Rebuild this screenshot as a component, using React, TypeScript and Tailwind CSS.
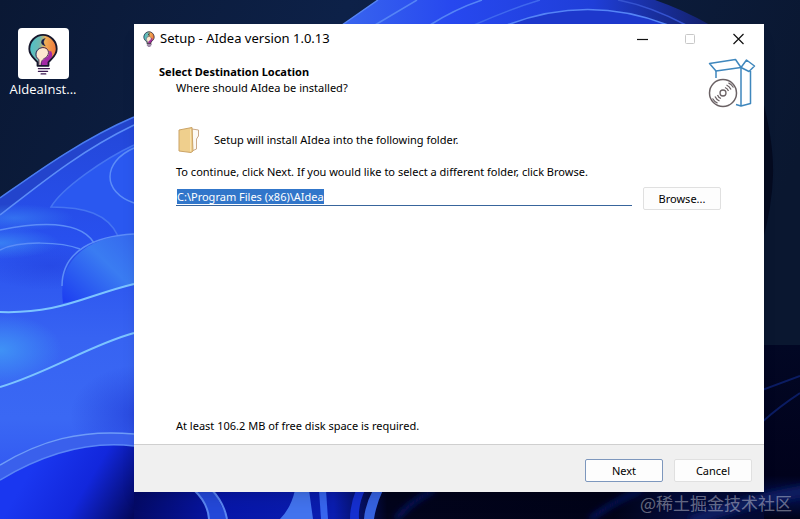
import { useEffect, useRef } from "react";

function Wallpaper() {
    return (
        <svg
            className="absolute inset-0 h-full w-full"
            viewBox="0 0 800 519"
            preserveAspectRatio="xMidYMid slice"
            aria-hidden="true"
        >
            <defs>
                <linearGradient id="sky" x1="0" y1="0" x2="1" y2="0.3">
                    <stop offset="0" stopColor="#0a1834" />
                    <stop offset="0.4" stopColor="#0d2148" />
                    <stop offset="1" stopColor="#0a1730" />
                </linearGradient>
                <linearGradient id="petal" gradientUnits="userSpaceOnUse" x1="0" y1="117" x2="0" y2="519">
                    <stop offset="0" stopColor="#2347d8" />
                    <stop offset="0.3" stopColor="#2850ee" />
                    <stop offset="0.55" stopColor="#3763f2" />
                    <stop offset="0.75" stopColor="#3a68f4" />
                    <stop offset="1" stopColor="#2b4cf0" />
                </linearGradient>
                <radialGradient id="glow">
                    <stop offset="0" stopColor="#3f92f6" />
                    <stop offset="1" stopColor="#3f92f6" stopOpacity="0" />
                </radialGradient>
                <radialGradient id="shade">
                    <stop offset="0" stopColor="#1526c8" stopOpacity="0.8" />
                    <stop offset="1" stopColor="#1526c8" stopOpacity="0" />
                </radialGradient>
                <linearGradient id="inner" x1="0" y1="1" x2="1" y2="0">
                    <stop offset="0" stopColor="#1c3cf0" />
                    <stop offset="0.6" stopColor="#3a7cf2" />
                    <stop offset="1" stopColor="#3467ee" />
                </linearGradient>
                <linearGradient id="deep" gradientUnits="userSpaceOnUse" x1="40" y1="455" x2="135" y2="512">
                    <stop offset="0" stopColor="#1a37f0" />
                    <stop offset="0.5" stopColor="#1227dc" />
                    <stop offset="1" stopColor="#03085e" />
                </linearGradient>
                <linearGradient id="crown" gradientUnits="userSpaceOnUse" x1="345" y1="0" x2="700" y2="0">
                    <stop offset="0" stopColor="#3864ee" />
                    <stop offset="0.3" stopColor="#2748ef" />
                    <stop offset="0.7" stopColor="#1f3ed8" />
                    <stop offset="1" stopColor="#142373" />
                </linearGradient>
                <linearGradient id="night" gradientUnits="userSpaceOnUse" x1="0" y1="345" x2="0" y2="519">
                    <stop offset="0" stopColor="#020724" />
                    <stop offset="0.75" stopColor="#01021c" />
                    <stop offset="0.88" stopColor="#030f4a" />
                    <stop offset="1" stopColor="#010318" />
                </linearGradient>
                <linearGradient id="base" gradientUnits="userSpaceOnUse" x1="134" y1="0" x2="800" y2="0">
                    <stop offset="0" stopColor="#040a66" />
                    <stop offset="0.13" stopColor="#0716a8" />
                    <stop offset="0.3" stopColor="#0a1db0" />
                    <stop offset="0.38" stopColor="#02041c" />
                    <stop offset="0.72" stopColor="#010318" />
                    <stop offset="0.82" stopColor="#040c3c" />
                    <stop offset="1" stopColor="#02072e" />
                </linearGradient>
                <filter id="soft" x="-20%" y="-50%" width="140%" height="200%">
                    <feGaussianBlur stdDeviation="3" />
                </filter>
            </defs>

            <rect width="800" height="519" fill="url(#sky)" />

            {/* petals on the left */}
            <path d="M0 198C30 177 80 140 134 117L300 60V519H0Z" fill="url(#petal)" />
            <path d="M0 198C30 177 80 140 134 117V125C80 151 40 184 0 215Z" fill="#2344cc" />
            <path d="M134 145C104 159 62 188 51 207C85 207 108 214 118 236L134 234Z" fill="#2a58f0" />
            <ellipse cx="14" cy="218" rx="60" ry="14" fill="url(#glow)" opacity="0.5" />
            <ellipse cx="0" cy="243" rx="60" ry="16" fill="url(#glow)" opacity="0.7" />
            <ellipse cx="50" cy="266" rx="70" ry="24" fill="url(#shade)" opacity="0.3" />
            <path d="M134 234C96 236 56 254 63 303C88 300 112 290 134 284Z" fill="url(#inner)" />
            <ellipse cx="0" cy="350" rx="62" ry="36" fill="url(#glow)" />
            <ellipse cx="140" cy="415" rx="70" ry="50" fill="url(#shade)" opacity="0.6" />
            <path d="M0 480C40 456 84 440 134 446V519H0Z" fill="url(#deep)" />
            <path d="M0 465C40 441 80 429 134 434V446C84 440 40 456 0 480Z" fill="#3a60ec" />
            <g fill="none" stroke="#5c8df8" strokeWidth="1.5">
                <path d="M0 198C30 177 80 140 134 117" stroke="#4a7cf0" />
                <path d="M0 215C40 184 80 151 134 125" />
                <path d="M118 236C108 214 85 207 51 207C62 188 104 159 134 145" stroke="#4574f2" />
                <path d="M134 148C102 162 102 192 134 203" />
                <path d="M0 230C40 222 80 220 94 243" />
                <path d="M0 250C20 240 62 242 80 249" />
                <path d="M134 234C96 236 62 250 62 286" />
                <path d="M0 465C40 441 80 429 134 434" stroke="#6f9cf8" />
                <path d="M0 480C40 456 84 440 134 446" stroke="#5a86f6" />
            </g>
            <g fill="none" stroke="#7cc4ff" strokeWidth="2">
                <path d="M0 312C60 314 84 296 134 284" />
                <path d="M0 387C50 372 90 345 134 333" />
            </g>

            {/* crest along the top edge */}
            <path d="M342 25L378 0H655Q684 10 710 25Z" fill="url(#crown)" />
            <path d="M507 25Q588 -6 668 25Z" fill="#1d38cc" />
            <g fill="none" stroke="#5584f6" strokeWidth="1.5">
                <path d="M342 25L378 0M375 25L417 0M430 25Q455 9 482 0" />
                <path d="M474 25Q510 9 540 0" stroke="#3f68ee" />
                <path d="M507 25Q588 -6 668 25" />
                <path d="M618 0Q650 6 686 25" stroke="#3553d0" />
            </g>

            {/* lower right */}
            <path d="M760 90Q774 140 773 175T760 250Z" fill="#050b20" />
            <rect x="740" y="345" width="60" height="174" fill="url(#night)" />
            <path d="M762 422Q780 406 800 393M762 390L800 376" fill="none" stroke="#0b1c62" strokeWidth="2" />

            {/* folds under the dialog */}
            <rect x="134" y="490" width="630" height="29" fill="url(#base)" />
            <path d="M194 490Q208 503 209 519H227Q222 504 212 490Z" fill="#2448d8" />
            <path d="M194 490Q208 503 209 519M212 490Q224 503 227 519" fill="none" stroke="#5a86f2" strokeWidth="2" />
            <path d="M280 519Q291 508 295 490H309L313 519Z" fill="#4273ee" />
            <path d="M319 490H326L328 519H321Z" fill="#3765ee" />
            <path d="M356 490H365Q358 505 359 519H350Q350 505 356 490Z" fill="#152fd0" />
            <path d="M373 490H383Q376 505 374 519H364Q365 505 373 490Z" fill="#3662e0" />
            <g filter="url(#soft)" fill="none">
                <path d="M396 519Q410 502 434 490M590 519Q616 500 642 490" stroke="#0c1a78" strokeWidth="4" />
                <path d="M690 522Q740 502 810 490" stroke="#081a60" strokeWidth="12" />
            </g>
        </svg>
    );
}

function BulbIcon({ className }: { className?: string }) {
    return (
        <svg className={className} viewBox="0 0 34 46" fill="none" aria-hidden="true">
            <defs>
                <linearGradient id="bulb" x1="0" y1="0" x2="1" y2="0.15">
                    <stop offset="0" stopColor="#45c3cf" />
                    <stop offset="0.4" stopColor="#6fb9b0" />
                    <stop offset="0.6" stopColor="#f0ad55" />
                    <stop offset="1" stopColor="#ee7b3e" />
                </linearGradient>
            </defs>
            <path
                d="M11 36V32C8 28 2 25 2 17.500C2 9 9 2 17 2S32 9 32 17.500C32 25 26 28 23 32V36Z"
                fill="url(#bulb)"
            />
            <path d="M12.500 35V30C8 26 9 17 17 16.500C25 17 25 25 21 28L15 35Z" fill="#fde6cf" />
            <path d="M23.500 20C26 27 15 27 14.500 35.500H22C22 31 30 28 26 20Z" fill="#a329a6" />
            <path d="M18 7C15 8 15 12 18 13C16.500 11 16.500 9 18 7Z" fill="#16204e" stroke="#16204e" strokeWidth="1.500" />
            <path d="M12.500 35V29C7 26 8.500 17 16 16C23 15 25.500 23 20 27C16 29 15 31 15 35" stroke="#3a1c50" />
            <path
                d="M11 36V32C8 28 2 25 2 17.500C2 9 9 2 17 2S32 9 32 17.500C32 25 26 28 23 32V36Z"
                stroke="#17172c"
                strokeWidth="2"
                strokeLinejoin="round"
            />
            <path d="M12 39H24M12 42H22M15 44.800H20" stroke="#3b1750" strokeWidth="1.500" strokeLinecap="round" />
        </svg>
    );
}

function FolderIcon() {
    return (
        <svg className="h-7 w-6 shrink-0" viewBox="0 0 24 28" fill="none" aria-hidden="true">
            <path d="M16 3L22.500 4V10L20.500 13V23L16 25Z" fill="#fdfaf5" stroke="#c9a98a" />
            <path d="M3 4L16 1.500L17 25L15 26.500L3 25Z" fill="#efcf8d" stroke="#cba366" />
            <path d="M14.500 3V25.500" stroke="#f8e2b2" />
        </svg>
    );
}

function SetupBoxIcon() {
    return (
        <svg className="h-[50px] w-12 shrink-0" viewBox="0 0 48 50" fill="none" aria-hidden="true">
            <g stroke="#3f87bd" strokeWidth="1.500" strokeLinejoin="round">
                <path d="M1.500 5.500L27.500 1.500L33 9.500L8 13Z" />
                <path d="M33 9.500L38.500 2L46.500 8L41 13.500Z" />
                <path d="M8 13V20M33 9.500V48L42.500 45.500V13M33 48L28 46.500" />
            </g>
            <circle cx="15" cy="35" r="13.500" fill="#fff" stroke="#6b6265" strokeWidth="1.500" />
            <g stroke="#6b6265" strokeWidth="1.300">
                <circle cx="15" cy="35" r="3" />
                <path d="M17 29.500A6 6 0 0 1 20.500 33M18.500 27A9 9 0 0 1 23 31.500M20.500 24.800A12 12 0 0 1 25.500 29.500" />
                <path d="M13 40.500A6 6 0 0 1 9.500 37M11.500 43A9 9 0 0 1 7 38.500M9.500 45.200A12 12 0 0 1 4.500 40.500" />
            </g>
        </svg>
    );
}

function TitleBar() {
    return (
        <header className="flex h-[29px] items-center pr-px pl-2">
            <BulbIcon className="h-4 w-3.5" />
            <h1 className="ml-1 flex-1 text-[13px]">Setup - AIdea version 1.0.13</h1>
            <button aria-label="Minimize" className="flex h-7 w-12 items-center justify-center">
                <svg className="h-3 w-3" viewBox="0 0 12 12" stroke="#111" aria-hidden="true">
                    <path d="M0 6.500H11" strokeWidth="1.200" />
                </svg>
            </button>
            <button aria-label="Maximize" disabled className="flex h-7 w-12 items-center justify-center">
                <svg className="h-3 w-3" viewBox="0 0 12 12" fill="none" stroke="#c8c8c8" aria-hidden="true">
                    <rect x="0.500" y="1.500" width="9" height="9" rx="1" />
                </svg>
            </button>
            <button aria-label="Close" className="flex h-7 w-12 items-center justify-center">
                <svg className="h-3 w-3" viewBox="0 0 12 12" stroke="#111" aria-hidden="true">
                    <path d="M0.500 1L10.500 11M10.500 1L0.500 11" strokeWidth="1.200" />
                </svg>
            </button>
        </header>
    );
}

const buttonClass = "h-[23px] w-[78px] shrink-0 rounded-xs border bg-[#fdfdfd] text-[11px] leading-5";

function SetupDialog() {
    const pathRef = useRef<HTMLInputElement>(null);

    useEffect(() => {
        pathRef.current?.focus();
        pathRef.current?.select();
    }, []);

    return (
        <section className="flex min-w-0 flex-1 flex-col bg-white text-black shadow-lg">
            <TitleBar />

            <div className="flex items-start justify-between pt-[5px] pr-2 pl-[25px]">
                <div className="pt-1.5 text-[11px] leading-4">
                    <h2 className="font-bold">Select Destination Location</h2>
                    <p className="pl-[17px]">Where should AIdea be installed?</p>
                </div>
                <SetupBoxIcon />
            </div>

            <div className="flex flex-1 flex-col pr-[43px] pb-2.5 pl-[42px] text-[11px] leading-4">
                <div className="flex items-center gap-3.5 pt-[18px]">
                    <FolderIcon />
                    <p>Setup will install AIdea into the following folder.</p>
                </div>
                <label htmlFor="folder" className="pt-2.5">
                    To continue, click Next. If you would like to select a different folder, click Browse.
                </label>
                <div className="mt-[7px] flex items-center gap-[11px]">
                    <input
                        id="folder"
                        ref={pathRef}
                        defaultValue="C:\Program Files (x86)\AIdea"
                        className="h-[19px] min-w-0 flex-1 self-start border-b border-[#38659c] px-px leading-4 outline-none selection:bg-[#2f74c9]/99 selection:text-white"
                    />
                    <button className={`${buttonClass} border-[#e0e0e0]`}>Browse...</button>
                </div>
                <p className="mt-auto">At least 106.2 MB of free disk space is required.</p>
            </div>

            <footer className="flex items-center justify-end gap-[11px] border-t border-[#cfcfcf] bg-[#f0f0f0] px-3 pt-3.5 pb-2.5">
                <button className={`${buttonClass} border-[#7d97bd]`}>Next</button>
                <button className={`${buttonClass} border-[#e0e0e0]`}>Cancel</button>
            </footer>
        </section>
    );
}

export default function App() {
    return (
        <main className="relative flex min-h-screen overflow-hidden bg-[#0a1834] pt-6 pr-9 pb-[27px] font-['Noto_Sans',sans-serif]">
            <Wallpaper />
            <div className="relative flex flex-1">
                <aside className="w-[134px] shrink-0 pt-1 pl-1">
                    <button className="flex w-[78px] flex-col items-center text-[13px] leading-5 text-white">
                        <span className="flex h-[51px] w-[51px] items-center justify-center rounded-sm bg-white">
                            <BulbIcon className="h-[42px] w-8" />
                        </span>
                        <span className="font-['Open_Sans',sans-serif]">AIdeaInst...</span>
                    </button>
                </aside>
                <SetupDialog />
            </div>
            <p className="absolute right-2 bottom-1 font-['Noto_Sans_CJK_SC',sans-serif] text-[17px] leading-6 text-white/40">
                @稀土掘金技术社区
            </p>
        </main>
    );
}
